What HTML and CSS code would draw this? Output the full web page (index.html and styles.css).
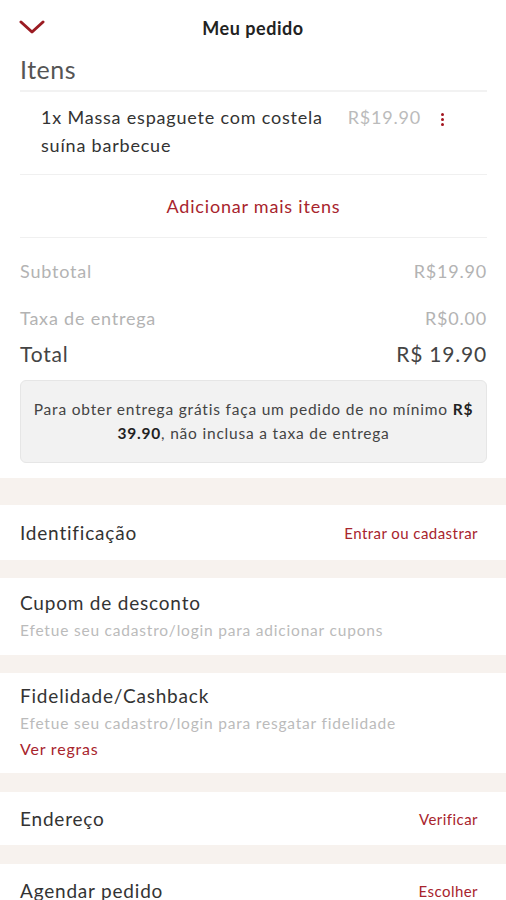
FILE: index.html
```html
<!DOCTYPE html>
<html lang="pt">
<head>
<meta charset="utf-8">
<link rel="stylesheet" href="styles.css">
</head>
<body>
<div class="page">
  <header class="topbar">
    <svg class="back" width="26" height="14" viewBox="0 0 26 14"><path d="M2 2 L13 12 L24 2" fill="none" stroke="#9b1b22" stroke-width="3" stroke-linecap="round" stroke-linejoin="round"/></svg>
    <h1 class="title">Meu pedido</h1>
  </header>
  <section class="order">
    <h2 class="items-title">Itens</h2>
    <div class="item">
      <div class="item-name">1x Massa espaguete com costela suína barbecue</div>
      <div class="item-price">R$19.90</div>
      <div class="kebab"><span></span><span></span><span></span></div>
    </div>
    <div class="add-more">Adicionar mais itens</div>
    <div class="line muted first"><span>Subtotal</span><span>R$19.90</span></div>
    <div class="line muted"><span>Taxa de entrega</span><span>R$0.00</span></div>
    <div class="line total"><span>Total</span><span>R$ 19.90</span></div>
    <div class="notice">Para obter entrega grátis faça um pedido de no mínimo <b>R$ 39.90</b>, não inclusa a taxa de entrega</div>
  </section>
  <div class="gap big"></div>
  <section class="row single first-row"><span class="label">Identificação</span><span class="link">Entrar ou cadastrar</span></section>
  <div class="gap"></div>
  <section class="row multi">
    <div class="label">Cupom de desconto</div>
    <div class="sub">Efetue seu cadastro/login para adicionar cupons</div>
  </section>
  <div class="gap"></div>
  <section class="row multi fid">
    <div class="label">Fidelidade/Cashback</div>
    <div class="sub">Efetue seu cadastro/login para resgatar fidelidade</div>
    <div class="link small">Ver regras</div>
  </section>
  <div class="gap tall"></div>
  <section class="row single"><span class="label">Endereço</span><span class="link">Verificar</span></section>
  <div class="gap tall"></div>
  <section class="row single"><span class="label">Agendar pedido</span><span class="link">Escolher</span></section>
</div>
</body>
</html>
```
FILE: styles.css
```css
* { box-sizing: border-box; margin: 0; padding: 0; }
html, body { background: #fff; }
body { font-family: Lato, "Noto Sans", sans-serif; color: #333; overflow: hidden; height: 900px; letter-spacing: 0.05em; }
.page { width: 506px; }
.topbar { position: relative; height: 56px; display: flex; align-items: center; justify-content: center; }
.back { position: absolute; left: 19px; top: 20px; }
.title { font-size: 18px; font-weight: 700; color: #222; letter-spacing: 0.03em; }
.order { padding: 0 19px 0 20px; }
.items-title { font-weight: 400; font-size: 25px; color: #555; line-height: 30px; margin-top: -2px; padding-bottom: 6px; border-bottom: 2px solid #f2f2f2; letter-spacing: 0.02em; }
.item { display: flex; align-items: flex-start; padding: 11px 0 15px 21px; border-bottom: 1px solid #f0f0f0; }
.item-name { flex: 1; font-size: 18px; line-height: 28px; color: #333; }
.item-price { font-size: 18px; line-height: 28px; color: #bbb; margin-left: 12px; margin-right: 10px; }
.kebab { width: 22px; margin-right: 34px; display: flex; flex-direction: column; align-items: center; gap: 2px; padding-top: 10px; }
.kebab span { width: 3px; height: 3px; background: #a3151f; border-radius: 50%; }
.add-more { text-align: center; color: #a8242d; font-size: 18px; line-height: 62px; border-bottom: 1px solid #f0f0f0; }
.line { display: flex; justify-content: space-between; }
.line.muted { color: #b3b3b3; font-size: 18px; line-height: 24px; margin-bottom: 23px; }
.line.first { margin-top: 21px; }
.line.muted + .line.total { margin-top: -12px; }
.line.total { font-size: 21px; color: #444; line-height: 26px; }
.notice { margin-top: 13px; background: #f2f2f2; border: 1px solid #e6e6e6; border-radius: 6px; text-align: center; font-size: 15.5px; line-height: 24px; color: #444; padding: 16px 6px 17px; }
.notice b { color: #222; }
.gap { height: 18px; background: #f7f2ee; }
.gap.tall { height: 19px; }
.gap.big { height: 27px; margin-top: 15px; }
.row { background: #fff; padding: 0 28px 0 20px; }
.row.single { display: flex; justify-content: space-between; align-items: center; height: 53px; }
.row.single.first-row { height: 55px; }
.row.multi { padding-top: 12px; padding-bottom: 12px; }
.label { font-size: 19px; color: #333; line-height: 26px; }
.sub { font-size: 15.5px; color: #bbb; line-height: 26px; margin-top: 1px; }
.link { color: #a8242d; font-size: 15px; letter-spacing: 0.03em; }
.link.small { line-height: 26px; font-size: 16px; letter-spacing: 0.05em; }
.row.multi.fid { padding-top: 10px; padding-bottom: 11px; }
```
